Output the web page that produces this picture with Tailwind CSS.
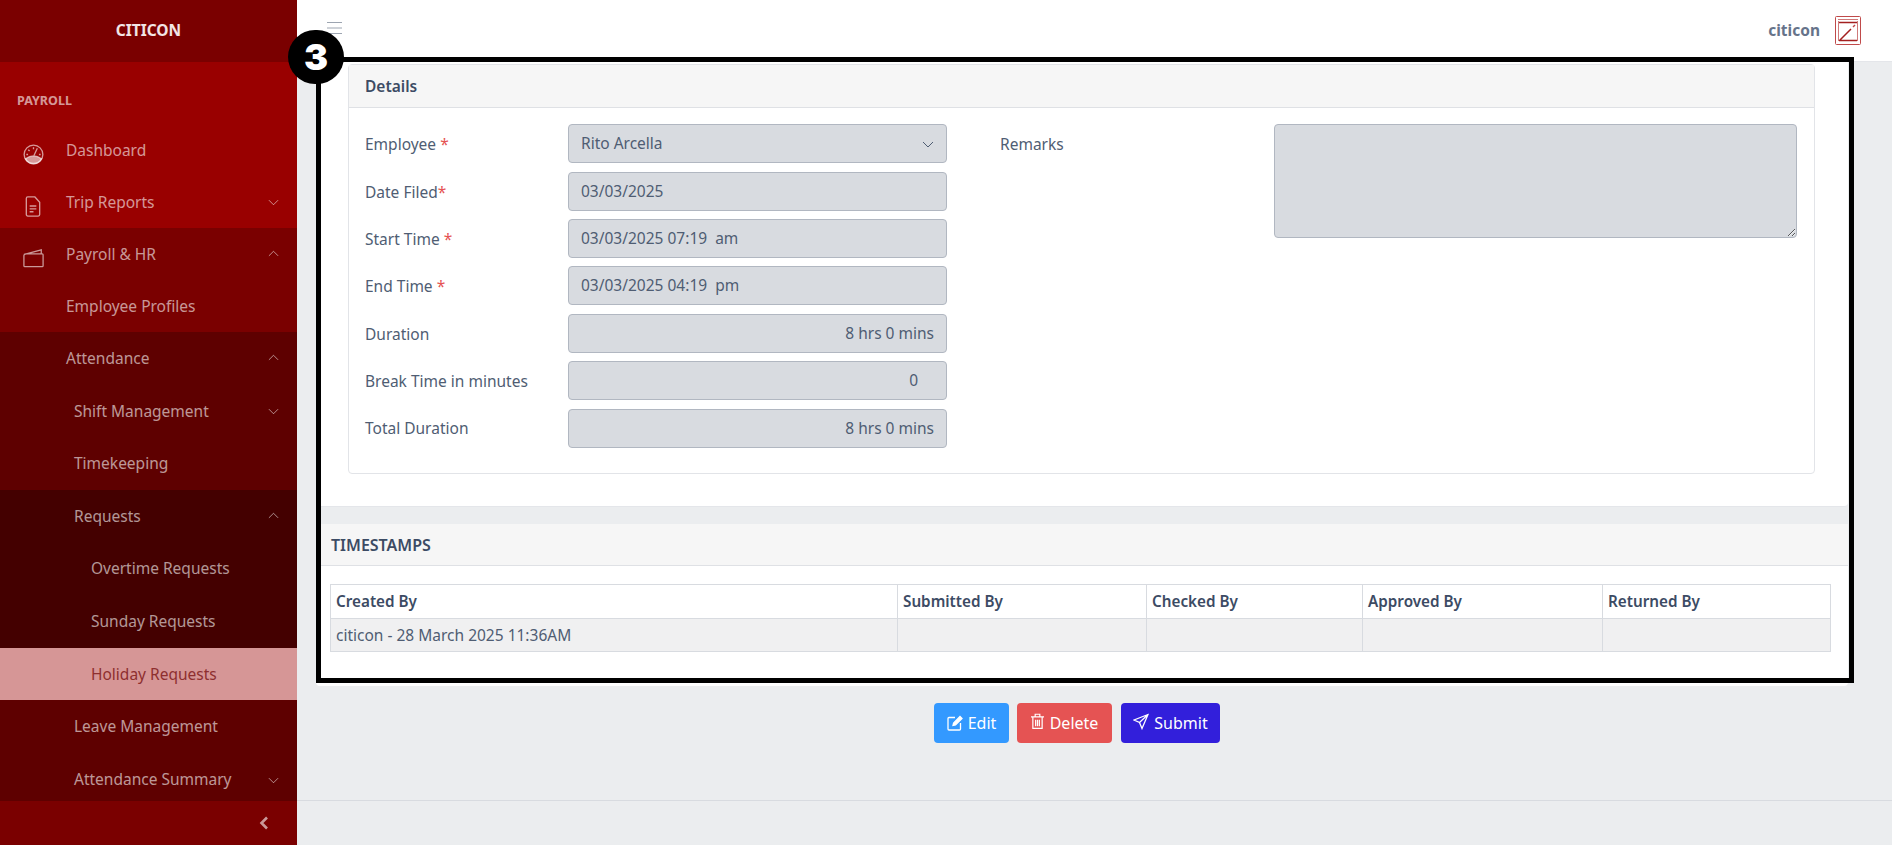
<!DOCTYPE html>
<html lang="en">
<head>
<meta charset="UTF-8">
<title>Holiday Requests</title>
<script src="https://cdn.jsdelivr.net/npm/@tailwindcss/browser@4"></script>
</head>
<body class="font-['Noto_Sans',sans-serif] text-[15.5px] text-[#4f5d73] bg-[#ebedef]">
<div class="relative flex h-[845px] w-[1892px] overflow-hidden">

  <!-- sidebar -->
  <aside class="w-[297px] shrink-0 flex flex-col bg-[#990000] text-white/60">
    <div class="h-[62px] shrink-0 flex items-center justify-center bg-[#7a0000] text-white/90 font-bold text-[15.5px]">CITICON</div>
    <div class="h-[61px] shrink-0 flex items-center px-[17px] pt-[17px] text-[12.5px] font-bold">PAYROLL</div>
    <div class="flex-1 min-h-0 flex flex-col">
      <a class="h-[53px] shrink-0 flex items-center pt-[2px]"><span class="w-[66px] flex justify-center translate-y-[4px]">
        <svg class="w-[21px] h-[21px]" viewBox="0 0 22 22" fill="none" stroke="currentColor" stroke-width="1.4"><circle cx="11" cy="11" r="9.8"/><path d="M2.500 15.500Q11 9.500 19.500 15.500A9.800 9.800 0 0 1 2.500 15.500z" fill="currentColor"/><path d="M11 3.500v2M5.500 6l1.400 1.400M3.500 11h1.800M18.500 11h-1.800M11.500 12L15 4.500"/></svg></span>Dashboard</a>
      <a class="h-[52px] shrink-0 flex items-center pt-[2px]"><span class="w-[66px] flex justify-center translate-y-[3px]">
        <svg class="w-[16px] h-[21px]" viewBox="0 0 16 22" fill="none" stroke="currentColor" stroke-width="1.4"><path d="M2.500 1h7.500l5 5.500v13a1.500 1.500 0 0 1-1.500 1.500h-11A1.500 1.500 0 0 1 1 19.500v-17A1.500 1.500 0 0 1 2.500 1zM4.500 10.500h7M4.500 13.500h7M4.500 16.500h4"/></svg></span><span class="flex-1">Trip Reports</span>
        <svg class="w-[11px] h-[12px] mr-[18px] -translate-y-px" viewBox="0 0 12 12" fill="none" stroke="currentColor"><path d="M1 4l5 5 5-5"/></svg></a>

      <div class="flex-1 min-h-0 flex flex-col bg-[#7a0000]">
        <a class="h-[52px] shrink-0 flex items-center pt-[2px]"><span class="w-[66px] flex justify-center translate-y-[3px]">
          <svg class="w-[21px] h-[20px]" viewBox="0 0 23 21" fill="none" stroke="currentColor" stroke-width="1.4"><path d="M1 8a2 2 0 0 1 2-2h18a1 1 0 0 1 1 1v12a1 1 0 0 1-1 1H2a1 1 0 0 1-1-1zM1.500 6.500L20 1.500v4.500"/></svg></span><span class="flex-1">Payroll &amp; HR</span>
          <svg class="w-[11px] h-[12px] mr-[18px] -translate-y-px" viewBox="0 0 12 12" fill="none" stroke="currentColor"><path d="M1 8l5-5 5 5"/></svg></a>
        <a class="h-[52px] shrink-0 flex items-center pl-[66px] pt-[2px]">Employee Profiles</a>

        <div class="flex-1 min-h-0 flex flex-col bg-[#5e0000]">
          <a class="h-[52px] shrink-0 flex items-center pl-[66px] pt-[2px]"><span class="flex-1">Attendance</span>
            <svg class="w-[11px] h-[12px] mr-[18px] -translate-y-px" viewBox="0 0 12 12" fill="none" stroke="currentColor"><path d="M1 8l5-5 5 5"/></svg></a>
          <a class="h-[53px] shrink-0 flex items-center pl-[74px] pt-[2px]"><span class="flex-1">Shift Management</span>
            <svg class="w-[11px] h-[12px] mr-[18px] -translate-y-px" viewBox="0 0 12 12" fill="none" stroke="currentColor"><path d="M1 4l5 5 5-5"/></svg></a>
          <a class="h-[53px] shrink-0 flex items-center pl-[74px]">Timekeeping</a>

          <div class="shrink-0 flex flex-col bg-[#440000]">
            <a class="h-[52px] flex items-center pl-[74px] pt-[2px]"><span class="flex-1">Requests</span>
              <svg class="w-[11px] h-[12px] mr-[18px] -translate-y-px" viewBox="0 0 12 12" fill="none" stroke="currentColor"><path d="M1 8l5-5 5 5"/></svg></a>
            <a class="h-[53px] flex items-center pl-[91px]">Overtime Requests</a>
            <a class="h-[53px] flex items-center pl-[91px]">Sunday Requests</a>
            <a class="h-[52px] flex items-center pl-[91px] pt-[2px] bg-[#d69696] text-[#8e2f2f]">Holiday Requests</a>
          </div>

          <a class="h-[53px] shrink-0 flex items-center pl-[74px]">Leave Management</a>
          <a class="flex-1 min-h-0 flex items-center pl-[74px] pt-[5px]"><span class="flex-1">Attendance Summary</span>
            <svg class="w-[11px] h-[12px] mr-[18px]" viewBox="0 0 12 12" fill="none" stroke="currentColor"><path d="M1 4l5 5 5-5"/></svg></a>
        </div>
      </div>
    </div>
    <div class="h-[44px] shrink-0 flex items-center justify-end pr-[27px] bg-[#7a0000]">
      <svg class="w-[12px] h-[14px]" viewBox="0 0 12 14" fill="none" stroke="currentColor" stroke-width="2.6"><path d="M9 1.500L3.500 7 9 12.500"/></svg>
    </div>
  </aside>

  <!-- main -->
  <div class="flex-1 min-w-0 flex flex-col">
    <header class="h-[62px] shrink-0 flex items-center justify-between bg-white border-b border-[#e4e6ea] pl-[30px] pr-[31px]">
      <svg class="w-[15px] h-[12px] -mt-[5px] text-[#9da5b1]" viewBox="0 0 15 12" stroke="currentColor" stroke-width="1"><path d="M0 .5h15M0 6h15M0 11.500h15"/></svg>
      <div class="flex items-center gap-[15px]">
        <span class="font-bold text-[#66738a] text-[15.5px]">citicon</span>
        <svg class="w-[26px] h-[29px]" viewBox="0 0 26 29" fill="none"><rect x=".5" y=".5" width="25" height="28" rx="1" stroke="#c04a4a"/><path d="M3.500 5v20M22.500 5v20" stroke="#cf7a7a"/><path d="M3 3.500h20" stroke="#cf7a7a"/><path d="M4 6.500h18M4 24.500h18M5 24l11-11" stroke="#a32020" stroke-width="1.500"/><path d="M18 11l2-2" stroke="#c04a4a" stroke-width="1.500"/></svg>
      </div>
    </header>

    <div class="flex-1 min-h-0 flex flex-col pl-[19px] pr-[44px]">
      <section class="h-[445px] shrink-0 bg-white rounded-b border-b border-[#e4e6ea] pt-[2px] pl-[32px] pr-[33px]">
        <div class="h-[410px] border border-[#e2e4e8] rounded">
          <div class="h-[43px] flex items-center px-4 pt-[2px] bg-[#f6f6f6] border-b border-[#dfe1e5] font-semibold text-[#3c4b64]">Details</div>
          <div class="flex pt-[16px] pl-4 pr-[17px]">
            <div class="w-[582px] shrink-0 flex flex-col">
              <div class="flex items-center h-[39px]"><label class="w-[203px] pt-[2px]">Employee <span class="text-[#e55353]">*</span></label>
                <div class="w-[379px] h-full flex items-center justify-between px-[12px] pt-px rounded bg-[#d8dbe0] border border-[#b1b7c1]">Rito Arcella
                  <svg class="w-[12px] h-[12px]" viewBox="0 0 12 12" fill="none" stroke="currentColor"><path d="M1 4l5 5 5-5"/></svg></div></div>
              <div class="flex items-center h-[39px] mt-[9px]"><label class="w-[203px] pt-[2px]">Date Filed<span class="text-[#e55353]">*</span></label>
                <div class="w-[379px] h-full flex items-center px-[12px] pt-px rounded bg-[#d8dbe0] border border-[#b1b7c1]">03/03/2025</div></div>
              <div class="flex items-center h-[39px] mt-[8px]"><label class="w-[203px] pt-[2px]">Start Time <span class="text-[#e55353]">*</span></label>
                <div class="w-[379px] h-full flex items-center px-[12px] pt-px rounded bg-[#d8dbe0] border border-[#b1b7c1]">03/03/2025 07:19&nbsp; am</div></div>
              <div class="flex items-center h-[39px] mt-[8px]"><label class="w-[203px] pt-[2px]">End Time <span class="text-[#e55353]">*</span></label>
                <div class="w-[379px] h-full flex items-center px-[12px] pt-px rounded bg-[#d8dbe0] border border-[#b1b7c1]">03/03/2025 04:19&nbsp; pm</div></div>
              <div class="flex items-center h-[39px] mt-[9px]"><label class="w-[203px] pt-[2px]">Duration</label>
                <div class="w-[379px] h-full flex items-center justify-end px-[12px] pt-px rounded bg-[#d8dbe0] border border-[#b1b7c1]">8 hrs 0 mins</div></div>
              <div class="flex items-center h-[39px] mt-[8px]"><label class="w-[203px] pt-[2px]">Break Time in minutes</label>
                <div class="w-[379px] h-full flex items-center justify-end pl-[12px] pr-[28px] pt-px rounded bg-[#d8dbe0] border border-[#b1b7c1]">0</div></div>
              <div class="flex items-center h-[39px] mt-[9px]"><label class="w-[203px]">Total Duration</label>
                <div class="w-[379px] h-full flex items-center justify-end px-[12px] rounded bg-[#d8dbe0] border border-[#b1b7c1]">8 hrs 0 mins</div></div>
            </div>
            <div class="flex-1 flex pl-[53px]">
              <label class="w-[274px] pt-[9px]">Remarks</label>
              <textarea disabled class="flex-1 h-[114px] rounded bg-[#d8dbe0] border border-[#b1b7c1]"></textarea>
            </div>
          </div>
        </div>
      </section>

      <section class="mt-[17px] h-[162px] shrink-0 bg-white rounded">
        <div class="h-[42px] flex items-center px-[15px] bg-[#f6f6f6] border-b border-[#dfe1e5] font-semibold text-[#3c4b64] text-[16px]">TIMESTAMPS</div>
        <div class="pt-[18px] pl-[14px] pr-[17px]">
          <table class="w-full table-fixed border-collapse">
            <thead class="text-[#3c4b64] text-left text-[15.25px]">
              <tr class="h-[34px]">
                <th class="w-[567px] font-semibold border border-[#d8dbe0] px-[5px]">Created By</th>
                <th class="w-[249px] font-semibold border border-[#d8dbe0] px-[5px]">Submitted By</th>
                <th class="w-[216px] font-semibold border border-[#d8dbe0] px-[5px]">Checked By</th>
                <th class="w-[240px] font-semibold border border-[#d8dbe0] px-[5px]">Approved By</th>
                <th class="font-semibold border border-[#d8dbe0] px-[5px]">Returned By</th>
              </tr>
            </thead>
            <tbody>
              <tr class="h-[33px] bg-[#f0f0f1]">
                <td class="border border-[#d8dbe0] px-[5px] pt-[2px]">citicon - 28 March 2025 11:36AM</td>
                <td class="border border-[#d8dbe0]"></td>
                <td class="border border-[#d8dbe0]"></td>
                <td class="border border-[#d8dbe0]"></td>
                <td class="border border-[#d8dbe0]"></td>
              </tr>
            </tbody>
          </table>
        </div>
      </section>

      <div class="mt-[17px] flex justify-center gap-2 pr-[10px] text-white text-[16px]">
        <button class="h-[40px] w-[75px] flex items-center justify-center gap-[5px] rounded bg-[#3399ff]">
          <svg class="w-[16px] h-[16px]" viewBox="0 0 16 16" fill="none" stroke="currentColor" stroke-width="1.300"><path d="M8 2.500H2a1 1 0 0 0-1 1V14a1 1 0 0 0 1 1h10.500a1 1 0 0 0 1-1V8"/><path d="M6 10.500l.6-2.500L13 1.500l2 2L8.500 10z" fill="currentColor"/></svg>Edit</button>
        <button class="h-[40px] w-[95px] flex items-center justify-center gap-[6px] rounded bg-[#e55353]">
          <svg class="w-[13px] h-[17px] -translate-y-[2px]" viewBox="0 0 14 18" fill="none" stroke="currentColor" stroke-width="1.300"><path d="M0 4h14M4.500 4V1.200h5V4M2 4v12.300h10V4M5 7v7M7 7v7M9 7v7"/></svg>Delete</button>
        <button class="h-[40px] w-[99px] ml-px flex items-center justify-center gap-[5px] rounded bg-[#321fdb]">
          <svg class="w-[16px] h-[17px] -translate-y-[2px]" viewBox="0 0 16 16" fill="none" stroke="currentColor" stroke-width="1.300"><path d="M15 1L1 6.500l5.500 2.500L9 15zM15 1L6.500 9"/></svg>Submit</button>
      </div>
    </div>

    <footer class="h-[45px] shrink-0 border-t border-[#d8dbe0]"></footer>
  </div>

  <!-- annotation overlay -->
  <div class="absolute left-[316px] top-[57px] w-[1538px] h-[626px] border-[5px] border-black pointer-events-none"></div>
  <div class="absolute left-[288px] top-[30px] w-[56px] h-[54px] rounded-full bg-black flex items-center justify-center text-white font-['Inter',sans-serif] font-black text-[36px] leading-none">3</div>
</div>
</body>
</html>
